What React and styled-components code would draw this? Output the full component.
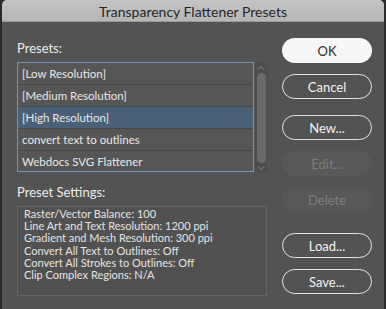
import styled, { createGlobalStyle } from 'styled-components'

const GlobalStyle = createGlobalStyle`
  html, body {
    margin: 0;
    padding: 0;
    background: #2a2a2a;
  }
  body {
    font-family: Lato, 'Liberation Sans', sans-serif;
  }
`

const Window = styled.div`
  margin: 0 2px;
  width: 382px;
  height: 309px;
  background: #535353;
  border-radius: 5px 5px 0 0;
  overflow: hidden;
  display: flex;
  flex-direction: column;
`

const TitleBar = styled.div`
  height: 22px;
  flex: none;
  background: linear-gradient(#c4c4c4, #b6b6b6);
  border-bottom: 1px solid #9a9a9a;
  box-sizing: border-box;
  display: flex;
  align-items: center;
  justify-content: center;
  color: #262626;
  font-size: 14px;
  padding-top: 1px;
`

const Body = styled.div`
  display: flex;
  gap: 15px;
  padding: 0 12px 0 15px;
`

const LeftColumn = styled.div`
  width: 250px;
  display: flex;
  flex-direction: column;
`

const Label = styled.div`
  color: #ececec;
  font-size: 13px;
  line-height: 16px;
  margin-top: ${p => p.top}px;
  margin-bottom: 6px;
`

const ListWrap = styled.div`
  display: flex;
  height: 110px;
`

const List = styled.div`
  width: 238px;
  border: 1px solid #6c94bd;
  box-sizing: border-box;
  background: #565656;
  display: flex;
  flex-direction: column;
`

const Row = styled.div`
  height: 22px;
  flex: none;
  box-sizing: border-box;
  border-bottom: 1px solid #474747;
  background: ${p => (p.selected ? '#4a6076' : 'transparent')};
  color: #e8e8e8;
  font-size: 11.5px;
  line-height: 21px;
  padding-left: 4px;
  &:last-child {
    border-bottom: none;
  }
`

const Scrollbar = styled.div`
  width: 12px;
  margin-left: 1px;
  background: #4e4e4e;
  display: flex;
  flex-direction: column;
  align-items: center;
  justify-content: space-between;
  padding: 3px 0 1px;
  box-sizing: border-box;
`

const Thumb = styled.div`
  width: 9px;
  flex: 1;
  margin: 3px 0;
  border-radius: 5px;
  background: #6a6a6a;
`

const Settings = styled.div`
  height: 90px;
  box-sizing: border-box;
  border: 1px solid #666666;
  background: #515151;
  padding: 1px 6px;
  color: #e4e4e4;
  font-size: 11px;
  line-height: 12.2px;
`

const RightColumn = styled.div`
  display: flex;
  flex-direction: column;
  padding-top: 16px;
`

const Button = styled.div`
  width: 90px;
  height: 25px;
  box-sizing: border-box;
  border-radius: 13px;
  margin-top: ${p => p.gap || 0}px;
  display: flex;
  align-items: center;
  justify-content: center;
  font-size: 13px;
  border: 1px solid ${p => (p.variant === 'outline' ? '#e2e2e2' : 'transparent')};
  background: ${p =>
    p.variant === 'primary' ? '#f7f7f7' : p.variant === 'disabled' ? '#585858' : 'transparent'};
  color: ${p =>
    p.variant === 'primary' ? '#2e2e2e' : p.variant === 'disabled' ? '#7c7c7c' : '#f2f2f2'};
`

const Arrow = ({ up }) => (
  <svg width="8" height="5" viewBox="0 0 8 5">
    <path
      d={up ? 'M1 4.5 L4 1.5 L7 4.5' : 'M1 0.5 L4 3.5 L7 0.5'}
      fill="none"
      stroke="#8a8a8a"
      strokeWidth="1"
    />
  </svg>
)

const presets = [
  '[Low Resolution]',
  '[Medium Resolution]',
  '[High Resolution]',
  'convert text to outlines',
  'Webdocs SVG Flattener',
]

const settings = [
  'Raster/Vector Balance: 100',
  'Line Art and Text Resolution: 1200 ppi',
  'Gradient and Mesh Resolution: 300 ppi',
  'Convert All Text to Outlines: Off',
  'Convert All Strokes to Outlines: Off',
  'Clip Complex Regions: N/A',
]

const buttons = [
  { label: 'OK', variant: 'primary', gap: 0 },
  { label: 'Cancel', variant: 'outline', gap: 11 },
  { label: 'New...', variant: 'outline', gap: 16 },
  { label: 'Edit...', variant: 'disabled', gap: 11 },
  { label: 'Delete', variant: 'disabled', gap: 11 },
  { label: 'Load...', variant: 'outline', gap: 21 },
  { label: 'Save...', variant: 'outline', gap: 11 },
]

export default function App() {
  return (
    <>
      <GlobalStyle />
      <Window>
        <TitleBar>Transparency Flattener Presets</TitleBar>
        <Body>
          <LeftColumn>
            <Label top={18}>Presets:</Label>
            <ListWrap>
              <List>
                {presets.map((p, i) => (
                  <Row key={p} selected={i === 2}>
                    {p}
                  </Row>
                ))}
              </List>
              <Scrollbar>
                <Arrow up />
                <Thumb />
                <Arrow />
              </Scrollbar>
            </ListWrap>
            <Label top={12}>Preset Settings:</Label>
            <Settings>
              {settings.map(s => (
                <div key={s}>{s}</div>
              ))}
            </Settings>
          </LeftColumn>
          <RightColumn>
            {buttons.map(b => (
              <Button key={b.label} variant={b.variant} gap={b.gap}>
                {b.label}
              </Button>
            ))}
          </RightColumn>
        </Body>
      </Window>
    </>
  )
}
